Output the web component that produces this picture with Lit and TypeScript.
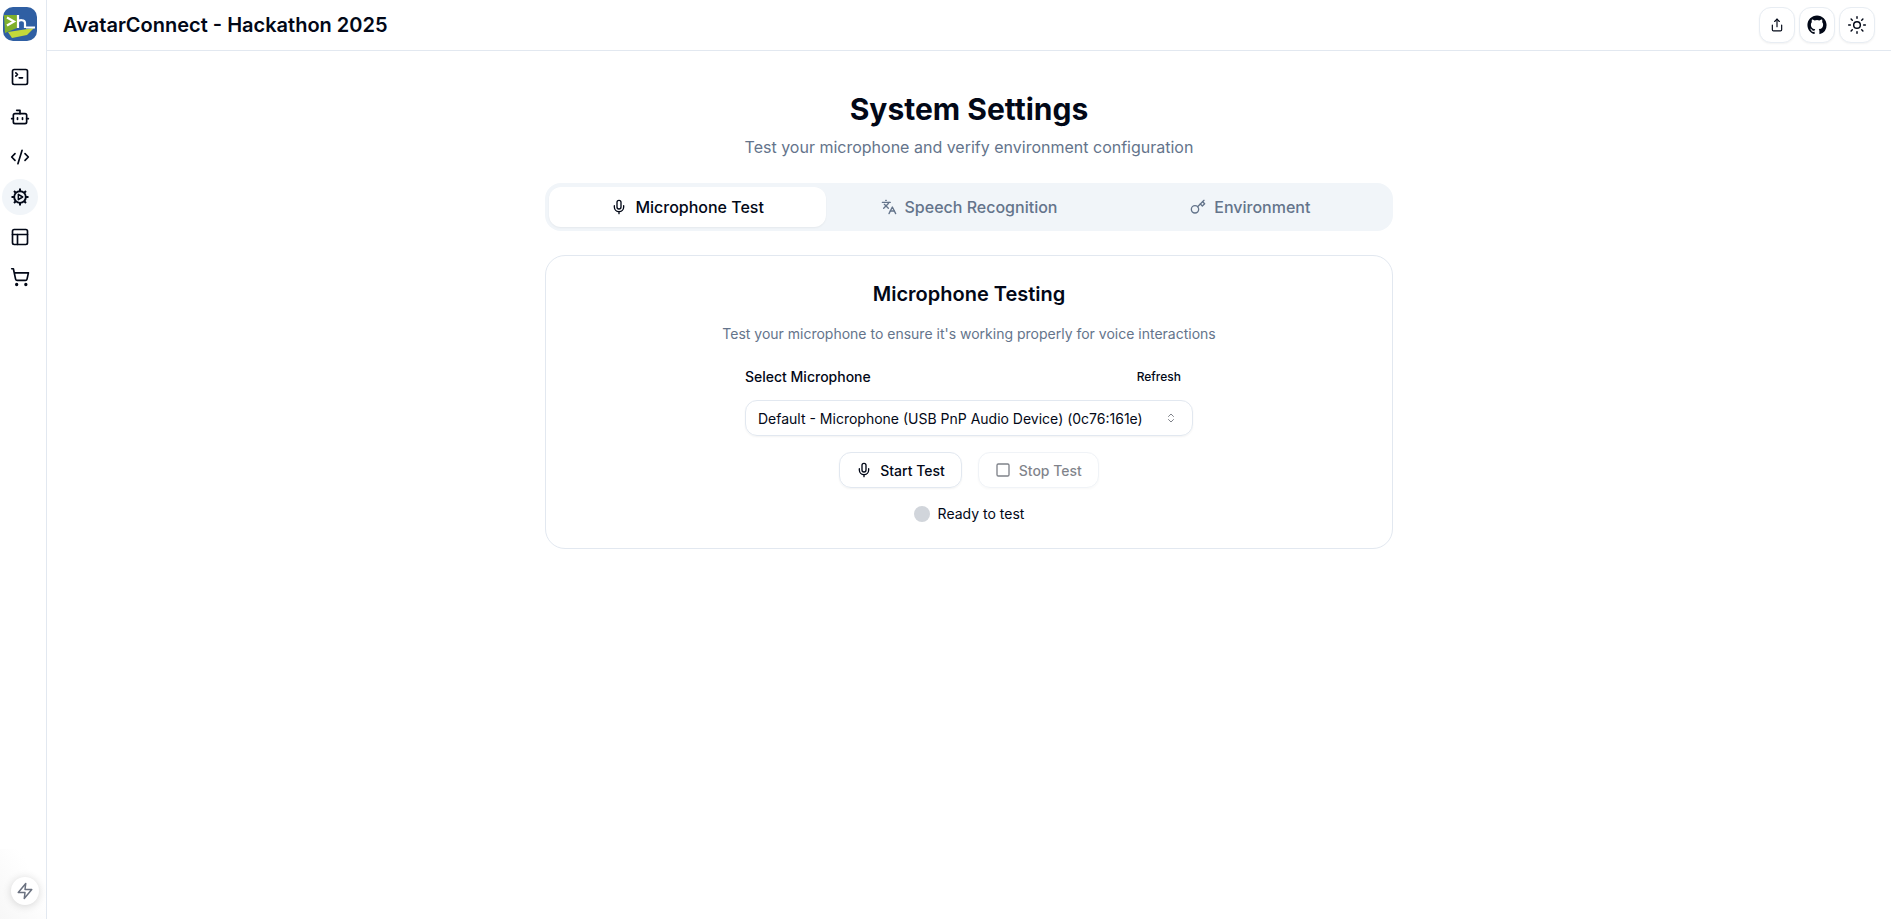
import { LitElement, html, css, svg } from "lit";
import { customElement } from "lit/decorators.js";

const ic = (body: unknown, size = 18, sw = 2) => html`<svg class="ic" width=${size} height=${size} viewBox="0 0 24 24" fill="none" stroke="currentColor" stroke-width=${sw} stroke-linecap="round" stroke-linejoin="round">${body}</svg>`;

const terminal = svg`<path d="m7 11 2-2-2-2"/><path d="M11 13h4"/><rect width="18" height="18" x="3" y="3" rx="2"/>`;
const bot = svg`<path d="M12 8V4H8"/><rect width="16" height="12" x="4" y="8" rx="2"/><path d="M2 14h2"/><path d="M20 14h2"/><path d="M15 13v2"/><path d="M9 13v2"/>`;
const code = svg`<path d="m18 16 4-4-4-4"/><path d="m6 8-4 4 4 4"/><path d="m14.5 4-5 16"/>`;
const cog = svg`<circle cx="12" cy="12" r="7" stroke-width="2.3"/><path stroke-width="2.4" stroke-linecap="butt" d="M12 1.8v3M12 19.2v3M1.8 12h3M19.2 12h3M4.8 4.8l2.1 2.1M17.1 17.1l2.1 2.1M4.8 19.2l2.1-2.1M17.1 6.9l2.1-2.1"/><path d="M10 8.8v6.4l5.2-3.2z" stroke-width="1.8"/>`;
const layout = svg`<rect width="18" height="18" x="3" y="3" rx="2"/><path d="M3 9h18"/><path d="M9 21V9"/>`;
const cart = svg`<circle cx="8" cy="21" r="1"/><circle cx="19" cy="21" r="1"/><path d="M2.05 2.05h2l2.66 12.42a2 2 0 0 0 2 1.58h9.78a2 2 0 0 0 1.95-1.57l1.65-7.43H5.12"/>`;
const share = svg`<path d="M4 12v8a2 2 0 0 0 2 2h12a2 2 0 0 0 2-2v-8"/><polyline points="16 6 12 2 8 6"/><line x1="12" x2="12" y1="2" y2="15"/>`;
const sun = svg`<circle cx="12" cy="12" r="4"/><path d="M12 2v2"/><path d="M12 20v2"/><path d="m4.93 4.93 1.41 1.41"/><path d="m17.66 17.66 1.41 1.41"/><path d="M2 12h2"/><path d="M20 12h2"/><path d="m6.34 17.66-1.41 1.41"/><path d="m19.07 4.93-1.41 1.41"/>`;
const mic = svg`<path d="M12 2a3 3 0 0 0-3 3v7a3 3 0 0 0 6 0V5a3 3 0 0 0-3-3Z"/><path d="M19 10v2a7 7 0 0 1-14 0v-2"/><line x1="12" x2="12" y1="19" y2="22"/>`;
const langs = svg`<path d="m5 8 6 6"/><path d="m4 14 6-6 2-3"/><path d="M2 5h12"/><path d="M7 2h1"/><path d="m22 22-5-10-5 10"/><path d="M14 18h6"/>`;
const key = svg`<circle cx="7.5" cy="15.5" r="5.5"/><path d="m21 2-9.6 9.6"/><path d="m15.5 7.5 3 3L22 7l-3-3"/>`;
const chevrons = svg`<path d="m7 15 5 5 5-5"/><path d="m7 9 5-5 5 5"/>`;
const square = svg`<rect width="18" height="18" x="3" y="3" rx="2"/>`;
const zap = svg`<polygon points="13 2 3 14 12 14 11 22 21 10 12 10 13 2"/>`;

@customElement("app-root")
export class AppRoot extends LitElement {
  static styles = css`
    :host { display: flex; height: 919px; font-family: Inter, "Liberation Sans", sans-serif; color: #020817; background: #fff; overflow: hidden; }
    .ic { display: block; flex: none; }
    .side { width: 40px; padding-right: 6px; flex: none; border-right: 1px solid #e2e8f0; display: flex; flex-direction: column; align-items: center; position: relative; background: #fff; }
    .logo { width: 36px; height: 36px; margin: 6px 0 17px 0; display: block; }
    .nav { display: flex; flex-direction: column; gap: 4px; align-items: center; }
    .nav-item { width: 36px; height: 36px; border-radius: 50%; display: flex; align-items: center; justify-content: center; }
    .nav-item.active { background: #f1f5f9; }
    .spark { position: absolute; left: 11px; top: 877px; width: 28px; height: 28px; border-radius: 50%; background: #fff; box-shadow: 0 1px 8px rgba(0,0,0,.16); display: flex; align-items: center; justify-content: center; color: #6b7280; }
    .glow { position: absolute; left: 0; bottom: 0; width: 46px; height: 70px; background: linear-gradient(to top right, #f7f7f7, #fff 70%); }
    .main { flex: 1; min-width: 0; display: flex; flex-direction: column; }
    .top { height: 51px; box-sizing: border-box; border-bottom: 1px solid #e2e8f0; display: flex; align-items: center; justify-content: space-between; padding: 0 16px 1px 16px; }
    .top h1 { margin: 0; font-size: 20px; line-height: 28px; font-weight: 600; }
    .actions { display: flex; gap: 4px; }
    .ibtn { width: 36px; height: 36px; box-sizing: border-box; border: 1px solid #e8edf3; border-radius: 12px; display: flex; align-items: center; justify-content: center; background: #fff; box-shadow: 0 1px 2px rgba(0,0,0,.05); }
    .content { flex: 1; display: flex; flex-direction: column; align-items: center; }
    .wrap { width: 848px; padding-top: 39px; display: flex; flex-direction: column; }
    .hero { text-align: center; margin-bottom: 24px; }
    .hero h2 { margin: 0; font-size: 30px; line-height: 38px; font-weight: 700; }
    .hero p { margin: 7px 0 0; font-size: 16px; line-height: 24px; color: #64748b; }
    .tabs { height: 48px; box-sizing: border-box; padding: 4px; background: #f1f5f9; border-radius: 16px; display: grid; grid-template-columns: repeat(3, 1fr); gap: 4px; margin-bottom: 24px; }
    .tab { display: flex; align-items: center; justify-content: center; gap: 8px; font-size: 16px; font-weight: 500; color: #64748b; border-radius: 12px; }
    .tab.active { background: #fff; color: #020817; box-shadow: 0 1px 2px rgba(0,0,0,.05); }
    .card { border: 1px solid #e2e8f0; border-radius: 20px; height: 294px; box-sizing: border-box; padding: 24px; display: flex; flex-direction: column; align-items: center; }
    .card h3 { margin: 0; font-size: 20px; line-height: 28px; font-weight: 600; }
    .card .desc { margin: 16px 0 0; font-size: 14px; line-height: 20px; color: #64748b; }
    .form { width: 448px; margin-top: 22px; display: flex; flex-direction: column; }
    .row { display: flex; justify-content: space-between; align-items: center; height: 20px; padding-right: 12px; }
    .row label { font-size: 14px; font-weight: 500; }
    .row span { font-size: 12px; font-weight: 500; }
    .select { margin-top: 14px; height: 36px; box-sizing: border-box; border: 1px solid #e2e8f0; border-radius: 12px; display: flex; align-items: center; justify-content: space-between; padding: 0 15px 0 12px; font-size: 14px; box-shadow: 0 1px 2px rgba(0,0,0,.05); }
    .select .ic { opacity: .5; }
    .btns { display: flex; justify-content: center; gap: 16px; margin-top: 16px; }
    .btn { height: 36px; box-sizing: border-box; padding: 0 16px; border: 1px solid #e2e8f0; border-radius: 12px; display: flex; align-items: center; gap: 8px; font-size: 14px; font-weight: 500; box-shadow: 0 1px 2px rgba(0,0,0,.05); }
    .btn.off { opacity: .5; }
    .status { display: flex; align-items: center; justify-content: center; gap: 8px; margin-top: 16px; font-size: 14px; line-height: 20px; }
    .dot { width: 16px; height: 16px; border-radius: 50%; background: #d1d5db; }
  `;

  render() {
    return html`
      <aside class="side">
        <svg class="logo" viewBox="0 0 36 36">
          <rect x="1" y="1" width="34" height="34" rx="10" fill="#2f5fa3"/>
          <path d="M2 9h13v13L3 27z" fill="#7fb02c"/>
          <path d="M6 26l26-4-7 7-15 3z" fill="#c3d83a"/>
          <path d="M5 11.5l7 4-7 4" fill="none" stroke="#fff" stroke-width="2.2"/>
          <path d="M16 9v13M16 16c1-2.5 7-2.5 7 1v5M24 21.5h9" fill="none" stroke="#fff" stroke-width="2.2"/>
        </svg>
        <nav class="nav">
          <div class="nav-item">${ic(terminal, 20)}</div>
          <div class="nav-item">${ic(bot, 20)}</div>
          <div class="nav-item">${ic(code, 20)}</div>
          <div class="nav-item active">${ic(cog, 20)}</div>
          <div class="nav-item">${ic(layout, 20)}</div>
          <div class="nav-item">${ic(cart, 20)}</div>
        </nav>
        <div class="glow"></div>
        <div class="spark">${ic(zap, 18, 2)}</div>
      </aside>
      <div class="main">
        <header class="top">
          <h1>AvatarConnect - Hackathon 2025</h1>
          <div class="actions">
            <div class="ibtn">${ic(share, 14)}</div>
            <div class="ibtn"><svg width="20" height="20" viewBox="0 0 24 24" fill="#020817"><path d="M12 .5C5.65.5.5 5.65.5 12c0 5.08 3.29 9.39 7.86 10.91.58.1.79-.25.79-.56v-2.14c-3.2.7-3.87-1.36-3.87-1.36-.52-1.33-1.28-1.68-1.28-1.68-1.05-.72.08-.7.08-.7 1.15.08 1.76 1.19 1.76 1.19 1.03 1.76 2.69 1.25 3.35.96.1-.75.4-1.25.73-1.54-2.55-.29-5.24-1.28-5.24-5.68 0-1.25.45-2.28 1.18-3.08-.12-.29-.51-1.46.11-3.04 0 0 .96-.31 3.16 1.18a11 11 0 0 1 5.76 0c2.2-1.49 3.16-1.18 3.16-1.18.63 1.58.23 2.75.11 3.04.74.8 1.18 1.83 1.18 3.08 0 4.41-2.69 5.38-5.25 5.67.41.36.78 1.06.78 2.14v3.17c0 .31.21.67.8.56A11.5 11.5 0 0 0 23.5 12C23.5 5.65 18.35.5 12 .5z"/></svg></div>
            <div class="ibtn">${ic(sun, 20, 1.75)}</div>
          </div>
        </header>
        <main class="content">
          <div class="wrap">
            <div class="hero">
              <h2>System Settings</h2>
              <p>Test your microphone and verify environment configuration</p>
            </div>
            <div class="tabs">
              <div class="tab active">${ic(mic, 16)}Microphone Test</div>
              <div class="tab">${ic(langs, 16)}Speech Recognition</div>
              <div class="tab">${ic(key, 16)}Environment</div>
            </div>
            <section class="card">
              <h3>Microphone Testing</h3>
              <p class="desc">Test your microphone to ensure it's working properly for voice interactions</p>
              <div class="form">
                <div class="row"><label>Select Microphone</label><span>Refresh</span></div>
                <div class="select">Default - Microphone (USB PnP Audio Device) (0c76:161e)${ic(chevrons, 12)}</div>
                <div class="btns">
                  <div class="btn">${ic(mic, 16)}Start Test</div>
                  <div class="btn off">${ic(square, 16)}Stop Test</div>
                </div>
                <div class="status"><span class="dot"></span>Ready to test</div>
              </div>
            </section>
          </div>
        </main>
      </div>
    `;
  }
}
